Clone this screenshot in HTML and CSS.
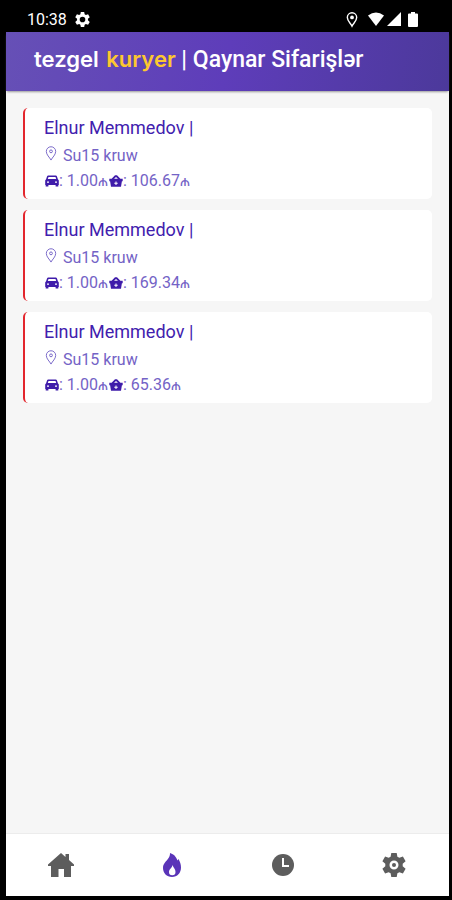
FILE: index.html
```
<!DOCTYPE html>
<html lang="az">
<head>
	<meta charset="UTF-8">
	<meta name="viewport" content="width=device-width, initial-scale=1">
	<title>tezgel kuryer | Qaynar Sifarişlər</title>
	<link rel="stylesheet" href="styles.css">
</head>
<body>
	<!-- shared icons -->
	<svg class="sprite" aria-hidden="true">
		<symbol id="gear" viewBox="0 0 24 24">
			<path fill-rule="evenodd" d="M9.3 0h5.4l.7 3.7 2 1.1 3.5-1.3 2.7 4.7-2.900 2.500v2.600l2.900 2.500-2.700 4.700-3.500-1.300-2 1.100-.7 3.700H9.300l-.7-3.700-2-1.100-3.500 1.300-2.700-4.700 2.900-2.500v-2.600L.4 8.200l2.700-4.700 3.500 1.300 2-1.100zM12 7.500a4.500 4.500 0 1 0 0 9 4.500 4.500 0 1 0 0-9z"/>
		</symbol>
		<symbol id="pin" viewBox="0 0 12 16">
			<path fill="none" stroke="currentColor" d="M6 15C4.500 12 1 9.500 1 5.800a5 5 0 0 1 10 0C11 9.500 7.500 12 6 15z"/>
			<circle cx="6" cy="5.700" r="1.500" fill="none" stroke="currentColor"/>
		</symbol>
		<symbol id="car" viewBox="0 0 14 12">
			<path fill-rule="evenodd" d="M3.200.5h7.600q.8 0 1.100.8L13 4.500q.8.400.8 1.300V10h-.5v1.500h-2.700V10H3.400v1.500H.7V10H.2V5.800q0-.9.8-1.300l1.100-3.200q.3-.8 1.100-.8zM3.500 2l-.7 2h8.400l-.7-2zM2 6.500v1.200h2V6.500zm8 0v1.200h2V6.500z"/>
		</symbol>
		<symbol id="basket" viewBox="0 0 14 12">
			<path fill-rule="evenodd" d="M6 .3h2l3.400 3.500h2.300v2.400h-.8L12 11.700H2L1.100 6.200H.3V3.800h2.300zM7 1.900L5 3.800h4zM6.500 6.500v1.200H5.300v1h1.200v1.200h1V8.700h1.200v-1H7.500V6.500z"/>
		</symbol>
	</svg>

	<div class="phone">
		<div class="status">
			<span class="time">10:38</span>
			<svg class="status-gear"><use href="#gear"/></svg>
			<div class="signals">
				<svg class="status-pin" viewBox="0 0 12 16"><path d="M6 15C4.500 12 1 9.500 1 5.800a5 5 0 0 1 10 0C11 9.500 7.500 12 6 15z"/><circle cx="6" cy="5.800" r="2"/></svg>
				<svg class="wifi" viewBox="0 0 16 14"><path d="M0 3.500Q8-2.500 16 3.500L8 14z"/></svg>
				<svg class="cell" viewBox="0 0 14 14"><path d="M14 0v14H0z"/></svg>
				<svg class="battery" viewBox="0 0 10 15"><path d="M3 0h4v1.500h2q1 0 1 1V14q0 1-1 1H1q-1 0-1-1V2.500q0-1 1-1h2z"/></svg>
			</div>
		</div>

		<header class="header">
			<h1><span class="logo">tezgel <span class="yellow">kuryer</span></span> | Qaynar Sifarişlər</h1>
		</header>

		<main class="orders">
			<article class="order">
				<h2>Elnur Memmedov |</h2>
				<p class="address"><svg class="pin"><use href="#pin"/></svg>Su15 kruw</p>
				<p class="price"><svg><use href="#car"/></svg>: 1.00<span class="manat">₼</span><svg><use href="#basket"/></svg>: 106.67<span class="manat">₼</span></p>
			</article>
			<article class="order">
				<h2>Elnur Memmedov |</h2>
				<p class="address"><svg class="pin"><use href="#pin"/></svg>Su15 kruw</p>
				<p class="price"><svg><use href="#car"/></svg>: 1.00<span class="manat">₼</span><svg><use href="#basket"/></svg>: 169.34<span class="manat">₼</span></p>
			</article>
			<article class="order">
				<h2>Elnur Memmedov |</h2>
				<p class="address"><svg class="pin"><use href="#pin"/></svg>Su15 kruw</p>
				<p class="price"><svg><use href="#car"/></svg>: 1.00<span class="manat">₼</span><svg><use href="#basket"/></svg>: 65.36<span class="manat">₼</span></p>
			</article>
		</main>

		<nav class="tabs">
			<button type="button" aria-label="Əsas">
				<svg viewBox="0 0 26 24"><path d="M13 0l4.500 4V1H21v6l5 4.500V13h-3v11h-7v-8h-5.500v8H3V13H0v-1.500z"/></svg>
			</button>
			<button type="button" class="active" aria-label="Qaynar sifarişlər">
				<svg viewBox="0 0 26 24"><path fill-rule="evenodd" d="M11 0c5 1.500 6.500 5 7.500 7.500l1-1.500c1.700 3 2.500 5.500 2.500 8.500 0 5.500-3.700 9.500-9 9.500s-9-4-9-9c0-4 2.500-6 4.500-8.500C10.500 4 11 2.500 11 0zm2.500 12c-.3 3-3.500 4-3.500 7a3.200 3.200 0 0 0 6.500 0c0-3-2-4-3-7z"/></svg>
			</button>
			<button type="button" aria-label="Tarixçə">
				<svg viewBox="0 0 26 24"><circle cx="13" cy="12" r="11"/><path class="hands" d="M13 5v8h6"/></svg>
			</button>
			<button type="button" aria-label="Ayarlar">
				<svg viewBox="0 0 26 24"><use href="#gear" x="1" width="24" height="24"/><circle cx="13" cy="12" r="2"/></svg>
			</button>
		</nav>
	</div>
</body>
</html>
```

FILE: styles.css
```
*{box-sizing:border-box;}
body{margin:0;background:#000;font-family:Roboto,"Liberation Sans",sans-serif;}
h1,h2,p{margin:0;font-weight:400;}
svg{fill:currentColor;}
.sprite{position:absolute;width:0;height:0;}

.phone{display:flex;flex-direction:column;min-height:100vh;padding:0 3px 4px 6px;}

.status{display:flex;align-items:center;height:32px;padding:6px 31px 0 21px;color:#fff;font-size:16px;}
.status-gear{width:15px;height:15px;margin-left:8px;}
.signals{display:flex;align-items:center;margin-left:auto;}
.status-pin{width:12px;height:15px;margin-right:10px;overflow:visible;}
.status-pin path{fill:none;stroke:#fff;stroke-width:1.5;}
.wifi{width:16px;height:14px;margin-right:3px;}
.cell{width:14px;height:14px;margin-right:7px;}
.battery{width:10px;height:15px;}

.header{display:flex;align-items:center;height:59px;padding:0 28px 4px;background:linear-gradient(100deg,#6650b6,#5e3dba 50%,#4c399b);box-shadow:0 2px 2px -1px #999;color:#fff;z-index:1;}
.header h1{font-size:23px;font-weight:500;line-height:28px;white-space:nowrap;}
.logo{font-family:Inter,sans-serif;font-size:22px;font-weight:600;}
.yellow{margin-left:2px;color:#fdc82f;}

.orders{display:flex;flex:1;flex-direction:column;gap:11px;padding:17px 17px;background:#f6f6f6;}
.order{padding:6px 19px;border-left:2px solid #e3262d;border-radius:5px;background:#fff;color:#7463c6;font-size:16px;}
.order h2{margin-bottom:1px;color:#4120ae;font-size:18px;line-height:28px;}
.order p{display:flex;align-items:center;line-height:25px;white-space:pre;}
.address .pin{width:12px;height:15px;margin:0 6px 4px 1px;}
.price svg{width:14px;height:12px;margin-left:1px;color:#3f1caa;}
.order .manat{font-size:15px;line-height:20px;}

.tabs{display:flex;height:63px;border-top:1px solid #ececec;background:#fff;}
.tabs button{display:flex;flex:1;align-items:center;justify-content:center;padding:0;border:0;background:none;color:#5d5d5d;cursor:pointer;}
.tabs button svg{width:26px;height:24px;}
.tabs .active{color:#5a34b8;}
.hands{fill:none;stroke:#fff;stroke-width:2;}
```
